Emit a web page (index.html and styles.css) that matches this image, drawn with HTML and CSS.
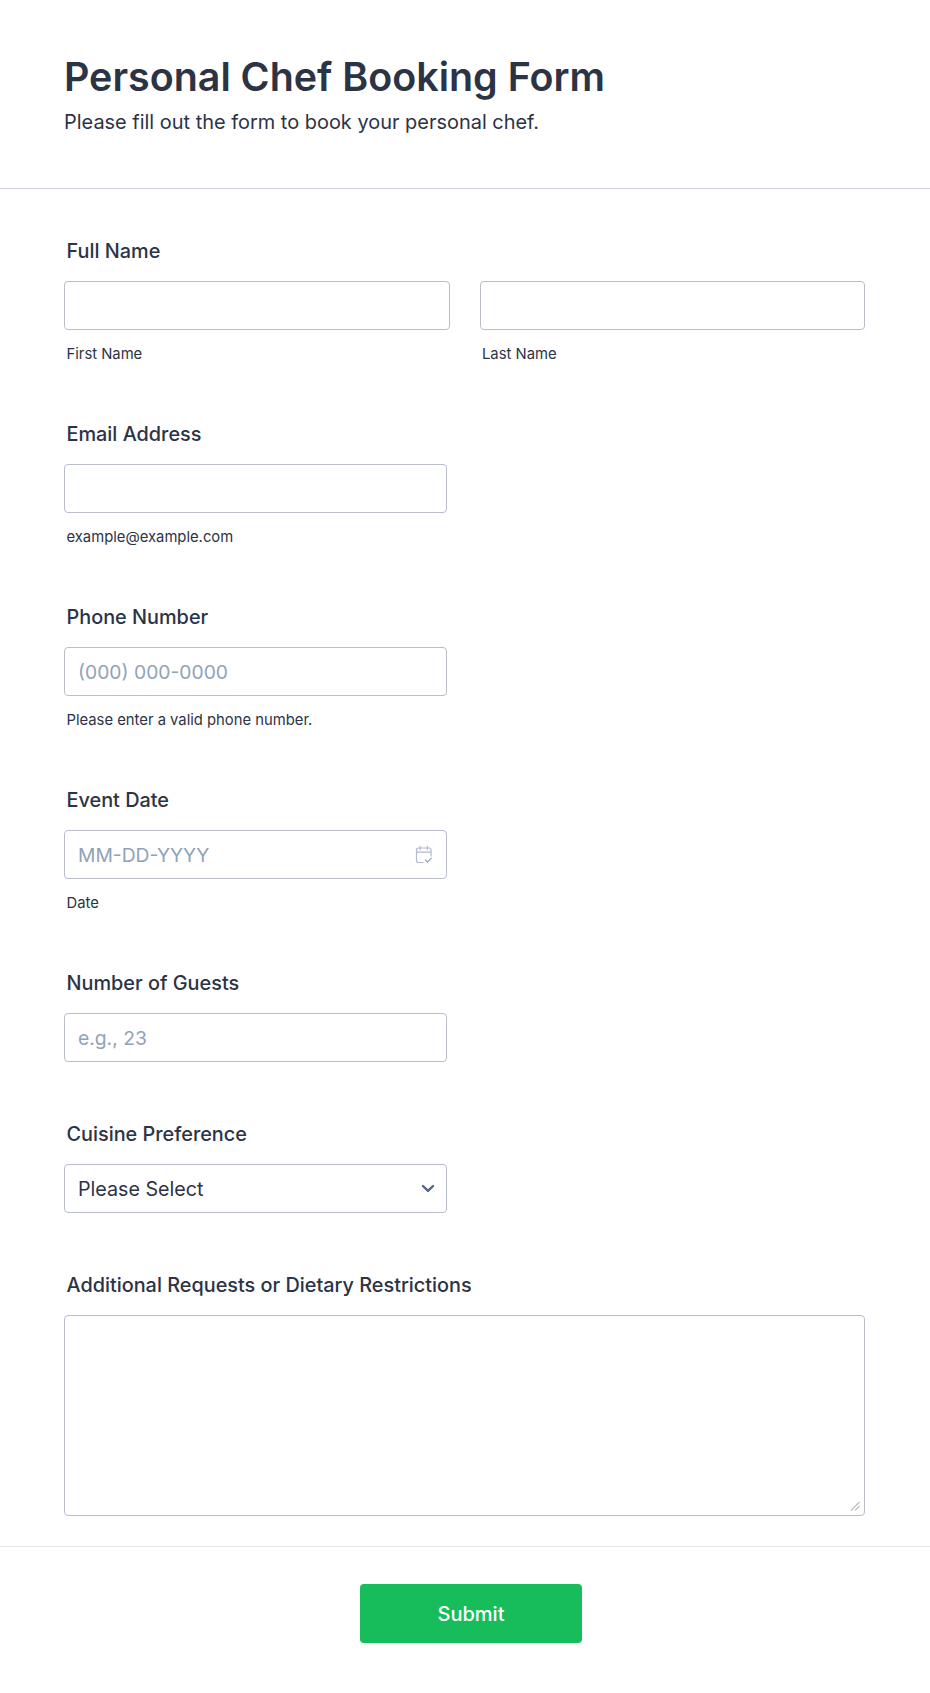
FILE: index.html
```html
<!DOCTYPE html>
<html lang="en">
<head>
<meta charset="utf-8">
<title>Personal Chef Booking Form</title>
<link rel="stylesheet" href="styles.css">
</head>
<body>
<form class="form">
  <header class="head">
    <h1 class="title">Personal Chef Booking Form</h1>
    <p class="subtitle">Please fill out the form to book your personal chef.</p>
  </header>
  <div class="fields">
    <div class="field has-sub">
      <label class="label">Full Name</label>
      <div class="name-grid">
        <div><input class="input" type="text"><span class="sub">First Name</span></div>
        <div><input class="input" type="text"><span class="sub">Last Name</span></div>
      </div>
    </div>
    <div class="field has-sub half">
      <label class="label">Email Address</label>
      <input class="input" type="text">
      <span class="sub">example@example.com</span>
    </div>
    <div class="field has-sub half">
      <label class="label">Phone Number</label>
      <input class="input" type="text" placeholder="(000) 000-0000">
      <span class="sub">Please enter a valid phone number.</span>
    </div>
    <div class="field has-sub half">
      <label class="label">Event Date</label>
      <div class="control">
        <input class="input" type="text" placeholder="MM-DD-YYYY">
        <svg class="icon-date" width="18" height="19" viewBox="0 0 18 19" fill="none" stroke="#b4bad0" stroke-width="1.2" stroke-linecap="round" stroke-linejoin="round"><path d="M8 17.5H3.2a1.7 1.7 0 0 1-1.7-1.7V4.7A1.7 1.7 0 0 1 3.2 3h11.1A1.7 1.7 0 0 1 16 4.7v6.3"/><path d="M1.5 7.2H16M5.2 1.2v3.4M12.3 1.2v3.4"/><path d="M10.5 15l2 2 3.8-3.9" stroke="#9aa3bd"/></svg>
      </div>
      <span class="sub">Date</span>
    </div>
    <div class="field half">
      <label class="label">Number of Guests</label>
      <input class="input" type="text" placeholder="e.g., 23">
    </div>
    <div class="field half">
      <label class="label">Cuisine Preference</label>
      <div class="control">
        <select class="input select"><option>Please Select</option></select>
        <svg class="icon-chevron" width="14" height="9" viewBox="0 0 14 9" fill="none" stroke="#51648c" stroke-width="2.4" stroke-linecap="round" stroke-linejoin="round"><path d="M2 2l5 4.8L12 2"/></svg>
      </div>
    </div>
    <div class="field last">
      <label class="label">Additional Requests or Dietary Restrictions</label>
      <div class="control">
        <textarea class="input area"></textarea>
        <svg class="icon-grip" width="10" height="10" viewBox="0 0 10 10" fill="none" stroke="#b9bdc6" stroke-width="1.1"><path d="M1 9.5L9.5 1M5 9.5L9.5 5"/></svg>
      </div>
    </div>
  </div>
  <footer class="foot">
    <button class="submit" type="button">Submit</button>
  </footer>
</form>
</body>
</html>
```
FILE: styles.css
```css
* { box-sizing: border-box; }
html, body { margin: 0; padding: 0; background: #fff; }
body { font-family: Inter, "Liberation Sans", sans-serif; color: #2c3345; }
.form { width: 930px; height: 1693px; }
.head { height: 189px; padding: 51px 64px 0; border-bottom: 1px solid #d3d5e4; }
.title { margin: 0; font-size: 39.4px; line-height: 53px; font-weight: 600; color: #2c3345; }
.subtitle { margin: 4px 0 0; font-size: 19.95px; line-height: 28px; color: #2c3345; }
.fields { padding: 48px 65px 0 64px; }
.field.has-sub { height: 183px; }
.field:not(.has-sub) { height: 151px; }
.field.last { height: auto; }
.half { width: 383px; }
.label { display: block; margin: 0 0 16px 2.5px; height: 28px; font-size: 19.85px; line-height: 28px; font-weight: 500; color: #2c3345; }
.name-grid { display: grid; grid-template-columns: 1fr 1fr; gap: 30px; }
.input { display: block; width: 100%; height: 49px; padding: 0 13px; background: #fff; border: 1px solid #b8bdc9; border-radius: 4px; font-family: inherit; font-size: 19.7px; color: #2c3345; outline: none; }
.input::placeholder { color: #8fa3b8; opacity: 1; font-size: 19.3px; }
.sub { display: block; margin: 15px 0 0 2.5px; font-size: 14.8px; line-height: 18px; color: #2c3345; }
.control { position: relative; }
.icon-date { position: absolute; right: 14px; top: 15px; }
.icon-chevron { position: absolute; right: 12px; top: 20px; pointer-events: none; }
.icon-grip { position: absolute; right: 5px; bottom: 5px; pointer-events: none; }
.select { appearance: none; -webkit-appearance: none; }
.area { height: 201px; padding: 10px 13px; resize: none; }
.foot { margin-top: 30px; border-top: 1px solid #e6e7ef; padding-top: 37px; padding-left: 360px; }
.submit { display: block; width: 222px; height: 59px; border: 0; border-radius: 4px; background: #18bd5b; color: #fff; font-family: inherit; font-size: 20px; font-weight: 500; }
```
